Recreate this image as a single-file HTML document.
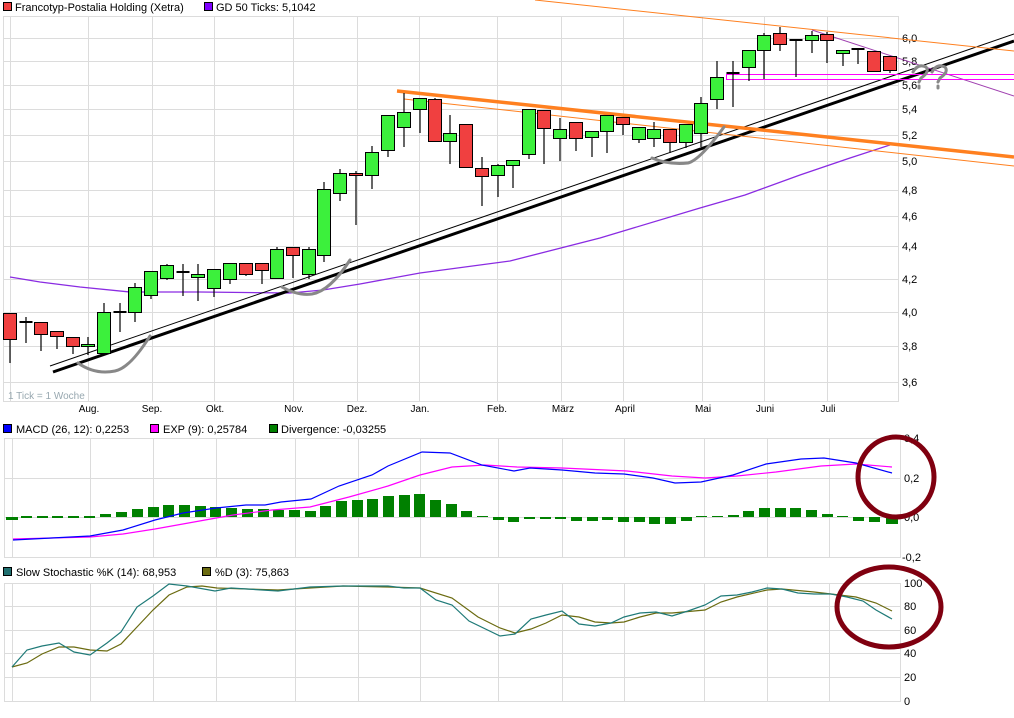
<!DOCTYPE html>
<html><head><meta charset="utf-8"><style>
html,body{margin:0;padding:0;background:#fff;}
svg{display:block;font-family:"Liberation Sans",sans-serif;}
</style></head><body>
<svg width="1014" height="718" viewBox="0 0 1014 718" xmlns="http://www.w3.org/2000/svg">
<!-- legends -->
<g font-size="11" fill="#000">
<rect x="3.5" y="2.5" width="8" height="8" fill="#f04040" stroke="#000"/>
<text x="15" y="11">Francotyp-Postalia Holding (Xetra)</text>
<rect x="204.5" y="2.5" width="8" height="8" fill="#7f00ff" stroke="#000"/>
<text x="216" y="11">GD 50 Ticks: 5,1042</text>
<rect x="3.5" y="424.5" width="8" height="8" fill="#0000ff" stroke="#000"/>
<text x="16" y="433">MACD (26, 12): 0,2253</text>
<rect x="150.5" y="424.5" width="8" height="8" fill="#ff00ff" stroke="#000"/>
<text x="163" y="433">EXP (9): 0,25784</text>
<rect x="269.5" y="424.5" width="8" height="8" fill="#008000" stroke="#000"/>
<text x="281" y="433">Divergence: -0,03255</text>
<rect x="3.5" y="567.5" width="8" height="8" fill="#1f6f6f" stroke="#000"/>
<text x="16" y="576">Slow Stochastic %K (14): 68,953</text>
<rect x="202.5" y="567.5" width="8" height="8" fill="#6b6b10" stroke="#000"/>
<text x="215" y="576">%D (3): 75,863</text>
</g>
<!-- grids -->
<g stroke="#dcdcdc" stroke-width="1" fill="none">
<path d="M3.5 16.5H898.5V401.5H3.5Z"/>
<path d="M3 38.5H898M3 61.5H898M3 85.5H898M3 109.5H898M3 135.5H898M3 161.5H898M3 190.5H898M3 216.5H898M3 246.5H898M3 279.5H898M3 312.5H898M3 346.5H898M3 382.5H898"/>
<path d="M10.5 16V401M88.5 16V401M152.5 16V401M214.5 16V401M293.5 16V401M357.5 16V401M419.5 16V401M497.5 16V401M561.5 16V401M623.5 16V401M702.5 16V401M764.5 16V401M827.5 16V401"/>
<path d="M4.5 438.5H900.5V557.5H4.5Z"/>
<path d="M4 478.5H900M4 517.5H900"/>
<path d="M4.5 583.5H900.5V701.5H4.5Z"/>
<path d="M4 606.5H900M4 630.5H900M4 653.5H900M4 677.5H900"/>
<path d="M12.5 438V557M90.5 438V557M153.5 438V557M216.5 438V557M295.5 438V557M358.5 438V557M420.5 438V557M498.5 438V557M562.5 438V557M624.5 438V557M704.5 438V557M767.5 438V557M829.5 438V557"/>
<path d="M12.5 583V701M90.5 583V701M153.5 583V701M216.5 583V701M295.5 583V701M358.5 583V701M420.5 583V701M498.5 583V701M562.5 583V701M624.5 583V701M704.5 583V701M767.5 583V701M829.5 583V701"/>
</g>
<!-- axis labels -->
<g font-size="11" fill="#000">
<text x="902" y="42">6,0</text><text x="902" y="65">5,8</text><text x="902" y="89">5,6</text><text x="902" y="113">5,4</text><text x="902" y="139">5,2</text><text x="902" y="165">5,0</text><text x="902" y="194">4,8</text><text x="902" y="220">4,6</text><text x="902" y="250">4,4</text><text x="902" y="283">4,2</text><text x="902" y="316">4,0</text><text x="902" y="350">3,8</text><text x="902" y="386">3,6</text>
<text x="904" y="442">0,4</text><text x="904" y="482">0,2</text><text x="904" y="521">0,0</text><text x="902" y="561">-0,2</text>
<text x="904" y="587">100</text><text x="904" y="610">80</text><text x="904" y="634">60</text><text x="904" y="657">40</text><text x="904" y="681">20</text><text x="904" y="705">0</text>
</g>
<g font-size="10" fill="#000" text-anchor="middle">
<text x="89" y="412">Aug.</text><text x="152" y="412">Sep.</text><text x="215" y="412">Okt.</text><text x="294" y="412">Nov.</text><text x="357" y="412">Dez.</text><text x="420" y="412">Jan.</text><text x="497" y="412">Feb.</text><text x="563" y="412">März</text><text x="625" y="412">April</text><text x="703" y="412">Mai</text><text x="765" y="412">Juni</text><text x="828" y="412">Juli</text>
</g>
<text x="8" y="399" font-size="10" fill="#98a8b0">1 Tick = 1 Woche</text>

<!-- GD50 -->
<polyline fill="none" stroke="#8a2be2" stroke-width="1.3" points="10,277 40,282 80,287 130,292 200,292 290,293 323,290 360,284 420,273 510,261 600,238 700,208 745,195 800,175 850,158 890,145"/>
<!-- trend lines -->
<line x1="53" y1="372" x2="1014" y2="41" stroke="#000" stroke-width="3"/>
<line x1="50" y1="366" x2="1014" y2="34" stroke="#000" stroke-width="1"/>
<line x1="397" y1="91" x2="1014" y2="157" stroke="#ff8020" stroke-width="3.5"/>
<line x1="404" y1="99" x2="1014" y2="166" stroke="#ff8020" stroke-width="1"/>
<line x1="535" y1="0" x2="1014" y2="51" stroke="#ff8020" stroke-width="1"/>
<line x1="812" y1="30" x2="1014" y2="96" stroke="#a040b0" stroke-width="1"/>
<rect x="726.5" y="74.5" width="290" height="5" fill="none" stroke="#ff00ff" stroke-width="1"/>
<!-- hand drawn -->
<g fill="none" stroke="#888" stroke-width="3" stroke-linecap="round">
<path d="M78 363 Q95 375 115 371 Q130 368 150 336"/>
<path d="M282 287 Q298 296 312 294 Q330 291 350 260"/>
<path d="M652 158 Q668 165 688 163 Q700 160 724 127"/>
<path d="M913 72 Q918 63 926 67 Q930 72 921 78 L919 82 M919 86 V88"/>
<path d="M932 72 Q937 63 945 67 Q949 72 940 78 L938 82 M938 86 V88"/>
</g>

<!-- candles -->
<g stroke="#000" stroke-width="1.2">
<path d="M10 313V363M26 317V343M41 322V351M57 331V349M73 337V354M88 337V355M104 303V353M120 303V332M135 283V322M151 271V299M167 264V280M183 264V296M198 264V301M214 269V297M230 263V284M246 263V276M262 263V284M277 247V278M293 247V278M309 247V279M324 182V262M340 169V201M356 171V225M372 146V189M388 115V157M404 93V147M420 98V133M435 98V141M450 115V164M466 124V168M482 157V206M498 164V197M513 160V188M529 109V159M544 110V164M560 118V161M576 122V151M592 131V157M607 115V153M623 117V135M639 127V143M654 122V147M670 129V153M686 124V148M701 97V147M717 61V109M733 61V107M749 50V81M764 33V79M780 27V51M796 40V77M812 31V53M827 32V63M843 50V66M858 49V64M874 51V71M890 56V73"/>
<path stroke-width="2" d="M19.5 322H32.5M113.5 312H126.5M176.5 272H189.5M726.5 73H739.5M789.5 40H802.5M851.5 49H864.5"/>
</g>
<g stroke="#000" stroke-width="1">
<g fill="#f04040">
<rect x="3.5" y="313.5" width="13" height="26"/><rect x="34.5" y="322.5" width="13" height="12"/><rect x="50.5" y="331.5" width="13" height="5"/><rect x="66.5" y="337.5" width="13" height="9"/>
<rect x="239.5" y="263.5" width="13" height="11"/><rect x="255.5" y="263.5" width="13" height="7"/><rect x="286.5" y="247.5" width="13" height="8"/>
<rect x="349.5" y="173.5" width="13" height="2"/><rect x="428.5" y="99.5" width="13" height="42"/><rect x="459.5" y="124.5" width="13" height="43"/><rect x="475.5" y="168.5" width="13" height="8"/>
<rect x="537.5" y="110.5" width="13" height="18"/><rect x="569.5" y="122.5" width="13" height="16"/><rect x="616.5" y="117.5" width="13" height="7"/><rect x="663.5" y="129.5" width="13" height="13"/>
<rect x="773.5" y="33.5" width="13" height="11"/><rect x="820.5" y="34.5" width="13" height="6"/><rect x="867.5" y="51.5" width="13" height="20"/><rect x="883.5" y="56.5" width="13" height="14"/>
</g>
<g fill="#3cf03c">
<rect x="81.5" y="344.5" width="13" height="2"/><rect x="97.5" y="312.5" width="13" height="41"/><rect x="128.5" y="287.5" width="13" height="25"/><rect x="144.5" y="271.5" width="13" height="24"/><rect x="160.5" y="265.5" width="13" height="13"/>
<rect x="191.5" y="274.5" width="13" height="3"/><rect x="207.5" y="269.5" width="13" height="19"/><rect x="223.5" y="263.5" width="13" height="16"/><rect x="270.5" y="249.5" width="13" height="29"/><rect x="302.5" y="249.5" width="13" height="25"/>
<rect x="317.5" y="189.5" width="13" height="66"/><rect x="333.5" y="173.5" width="13" height="20"/><rect x="365.5" y="152.5" width="13" height="23"/><rect x="381.5" y="115.5" width="13" height="35"/><rect x="397.5" y="112.5" width="13" height="15"/>
<rect x="413.5" y="98.5" width="13" height="11"/><rect x="443.5" y="133.5" width="13" height="8"/><rect x="491.5" y="165.5" width="13" height="10"/><rect x="506.5" y="160.5" width="13" height="5"/><rect x="522.5" y="109.5" width="13" height="45"/>
<rect x="553.5" y="129.5" width="13" height="9"/><rect x="585.5" y="131.5" width="13" height="6"/><rect x="600.5" y="115.5" width="13" height="16"/><rect x="632.5" y="127.5" width="13" height="12"/><rect x="647.5" y="129.5" width="13" height="9"/>
<rect x="679.5" y="124.5" width="13" height="18"/><rect x="694.5" y="103.5" width="13" height="30"/><rect x="710.5" y="77.5" width="13" height="22"/><rect x="742.5" y="50.5" width="13" height="17"/><rect x="757.5" y="35.5" width="13" height="15"/>
<rect x="805.5" y="35.5" width="13" height="5"/><rect x="836.5" y="50.5" width="13" height="3"/>
</g>
</g>

<!-- MACD divergence bars -->
<g fill="#008000">
<rect x="6" y="517" width="12" height="3"/><rect x="21" y="516" width="11" height="2"/><rect x="37" y="516" width="11" height="2"/><rect x="52" y="516" width="11" height="2"/><rect x="68" y="516" width="11" height="2"/><rect x="84" y="516" width="11" height="2"/>
<rect x="100" y="514" width="11" height="3"/><rect x="116" y="512" width="11" height="5"/><rect x="132" y="509" width="11" height="8"/><rect x="148" y="507" width="11" height="10"/><rect x="163" y="505" width="11" height="12"/><rect x="179" y="505" width="11" height="12"/>
<rect x="195" y="506" width="11" height="11"/><rect x="210" y="507" width="11" height="10"/><rect x="226" y="508" width="11" height="9"/><rect x="242" y="509" width="11" height="8"/><rect x="258" y="509" width="11" height="8"/><rect x="273" y="510" width="11" height="7"/>
<rect x="289" y="510" width="11" height="7"/><rect x="305" y="511" width="11" height="6"/><rect x="320" y="506" width="11" height="11"/><rect x="336" y="501" width="11" height="16"/><rect x="352" y="500" width="11" height="17"/><rect x="367" y="499" width="11" height="18"/>
<rect x="383" y="496" width="11" height="21"/><rect x="399" y="495" width="11" height="22"/><rect x="414" y="494" width="11" height="23"/><rect x="430" y="500" width="11" height="17"/><rect x="446" y="504" width="11" height="13"/><rect x="461" y="511" width="11" height="6"/>
<rect x="477" y="516" width="11" height="1"/><rect x="493" y="517" width="11" height="3"/><rect x="508" y="517" width="11" height="5"/><rect x="524" y="517" width="11" height="2"/><rect x="540" y="517" width="11" height="2"/><rect x="555" y="517" width="11" height="2"/>
<rect x="571" y="517" width="11" height="4"/><rect x="587" y="517" width="11" height="4"/><rect x="602" y="517" width="11" height="3"/><rect x="618" y="517" width="11" height="5"/><rect x="634" y="517" width="11" height="5"/><rect x="649" y="517" width="11" height="7"/>
<rect x="665" y="517" width="11" height="7"/><rect x="681" y="517" width="11" height="4"/><rect x="696" y="516" width="11" height="1"/><rect x="712" y="516" width="11" height="1"/><rect x="728" y="515" width="11" height="2"/><rect x="743" y="511" width="11" height="6"/>
<rect x="759" y="508" width="11" height="9"/><rect x="775" y="508" width="11" height="9"/><rect x="790" y="508" width="11" height="9"/><rect x="806" y="510" width="11" height="7"/><rect x="822" y="514" width="11" height="3"/><rect x="837" y="516" width="11" height="1"/>
<rect x="853" y="517" width="11" height="4"/><rect x="869" y="517" width="11" height="5"/><rect x="886" y="517" width="12" height="7"/>
</g>
<!-- MACD & EXP -->
<polyline fill="none" stroke="#ff00ff" stroke-width="1.2" points="13,539 90,537 123,534 155,529 194,522 233,515 272,510 310,507 349,497 388,486 420,475 452,467 485,465 517,467 562,468 627,471 672,476 705,478 737,476 776,472 821,466 856,464 892,467"/>
<polyline fill="none" stroke="#0000ff" stroke-width="1.2" points="13,540 90,536 123,530 155,520 183,513 216,508 246,505 265,505 281,502 311,499 339,486 372,475 388,466 422,452 450,453 482,465 514,471 530,468 562,470 595,473 624,474 653,478 675,483 701,482 733,475 766,464 801,459 824,458 856,463 892,473"/>
<!-- stochastic -->
<polyline fill="none" stroke="#6b6b10" stroke-width="1.2" points="12,667 27,663 42,654 59,647 74,647 90,650 107,651 121,644 137,627 153,610 169,595 187,587 202,586 217,588 278,590 310,588 343,586 388,587 420,588 452,598 478,617 500,628 515,633 531,629 546,623 562,615 579,617 595,622 611,623 624,622 640,617 656,613 672,613 705,610 721,602 737,597 767,590 782,589 814,592 831,594 856,597 876,603 892,611"/>
<polyline fill="none" stroke="#1f7a78" stroke-width="1.2" points="12,667 27,650 42,646 59,643 74,652 90,655 107,643 121,632 137,607 153,596 169,584 187,586 215,591 231,588 278,591 310,587 343,586 388,586 404,588 420,588 436,600 452,605 469,621 500,636 515,634 531,619 546,615 562,611 579,624 595,626 611,623 624,617 640,613 656,612 672,616 688,611 705,605 721,596 737,595 752,592 767,588 782,589 798,593 814,594 831,594 847,597 863,601 876,610 892,619"/>
<!-- circles -->
<ellipse cx="896" cy="477" rx="38" ry="40" fill="none" stroke="#800010" stroke-width="5"/>
<ellipse cx="889" cy="607" rx="52" ry="40" fill="none" stroke="#800010" stroke-width="5"/>
</svg>
</body></html>
